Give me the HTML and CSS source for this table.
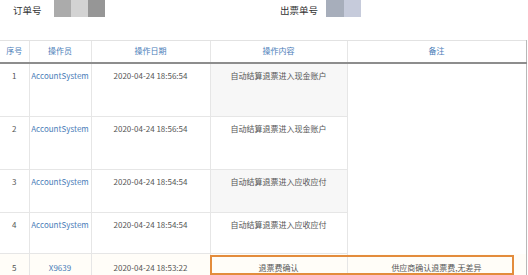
FILE: index.html
```html
<!DOCTYPE html>
<html lang="zh">
<head>
<meta charset="utf-8">
<link rel="stylesheet" href="styles.css">
</head>
<body>
<div class="page">
  <div class="info">
    <div class="field field-order">
      <span class="label">订单号</span>
      <span class="mask">
        <i class="m m1"></i><i class="m m2"></i><i class="m m3"></i>
      </span>
    </div>
    <div class="field field-ticket">
      <span class="label">出票单号</span>
      <span class="mask">
        <i class="m m4"></i><i class="m m5"></i>
      </span>
    </div>
  </div>
  <div class="table-wrap">
    <table class="log">
      <colgroup>
        <col class="c1"><col class="c2"><col class="c3"><col class="c4"><col class="c5">
      </colgroup>
      <thead>
        <tr><th>序号</th><th>操作员</th><th>操作日期</th><th>操作内容</th><th>备注</th></tr>
      </thead>
      <tbody>
        <tr class="r1"><td>1</td><td class="link">AccountSystem</td><td>2020-04-24 18:56:54</td><td class="shade">自动结算退票进入现金账户</td><td></td></tr>
        <tr class="r2"><td>2</td><td class="link">AccountSystem</td><td>2020-04-24 18:56:54</td><td>自动结算退票进入现金账户</td><td></td></tr>
        <tr class="r3"><td>3</td><td class="link">AccountSystem</td><td>2020-04-24 18:54:54</td><td class="shade">自动结算退票进入应收应付</td><td></td></tr>
        <tr class="r4"><td>4</td><td class="link">AccountSystem</td><td>2020-04-24 18:54:54</td><td>自动结算退票进入应收应付</td><td></td></tr>
        <tr class="r5"><td>5</td><td class="link">X9639</td><td>2020-04-24 18:53:22</td><td>退票费确认</td><td>供应商确认退票费,无差异</td></tr>
      </tbody>
    </table>
    <div class="highlight"></div>
  </div>
</div>
</body>
</html>
```

FILE: styles.css
```css
* { box-sizing: border-box; }
html, body { margin: 0; padding: 0; background: #fff; }
body {
  width: 528px;
  height: 275px;
  overflow: hidden;
  font-family: "Noto Sans CJK SC", "Liberation Sans", sans-serif;
  color: #555;
}
.page { width: 528px; }
.info {
  height: 40px;
  display: flex;
  align-items: flex-start;
}
.field { display: flex; align-items: flex-start; }
.field-order { width: 280px; padding-left: 13px; }
.field-ticket { padding-left: 0; }
.label {
  font-size: 9.5px;
  line-height: 12px;
  color: #333;
  margin-top: 4px;
}
.field-order .label { margin-right: 12px; }
.field-ticket .label { margin-right: 8px; }
.mask { display: flex; height: 17px; }
.m { display: block; height: 17px; }
.m1 { width: 17px; background: #ababab; }
.m2 { width: 17px; background: #d3d3d3; }
.m3 { width: 17px; background: #969696; }
.m4 { width: 18px; background: #a7aebb; }
.m5 { width: 17px; background: #c6cbdb; }

.table-wrap { position: relative; width: 526px; }
.log {
  width: 526px;
  table-layout: fixed;
  border-collapse: collapse;
  font-size: 8px;
}
.c1 { width: 29px; }
.c2 { width: 62px; }
.c3 { width: 119px; }
.c4 { width: 137px; }
.c5 { width: 179px; }
.log th {
  height: 22px;
  font-weight: normal;
  color: #4a7db8;
  border-top: 1px solid #e2e2e2;
  border-bottom: 2px solid #8d8d8d;
  border-left: 1px solid #e6e6e6;
  text-align: center;
  vertical-align: middle;
  padding: 0;
  line-height: 12px;
}
.log th:first-child { border-left: none; }
.log th:last-child { border-right: 1px solid #b8b8b8; }
.log td {
  border-left: 1px solid #e6e6e6;
  border-bottom: 1px solid #e6e6e6;
  text-align: center;
  vertical-align: top;
  padding: 6px 0 0;
  line-height: 12px;
  color: #555;
  white-space: nowrap;
}
.log td:first-child { border-left: none; }
.log td:last-child { border-right: 1px solid #b8b8b8; border-bottom: none; }
.log td.link { color: #4a7db8; }
.log td.shade { background: #f7f7f7; }
.r1 td { height: 54px; }
.r2 td { height: 53px; }
.r3 td { height: 43px; }
.r4 td { height: 41px; }
.r5 td { height: 22px; padding-top: 8px; background: #fffdf8; }

.highlight {
  position: absolute;
  left: 210px;
  top: 215px;
  width: 304px;
  height: 20px;
  border: 2px solid #e38c3c;
  pointer-events: none;
}
```
